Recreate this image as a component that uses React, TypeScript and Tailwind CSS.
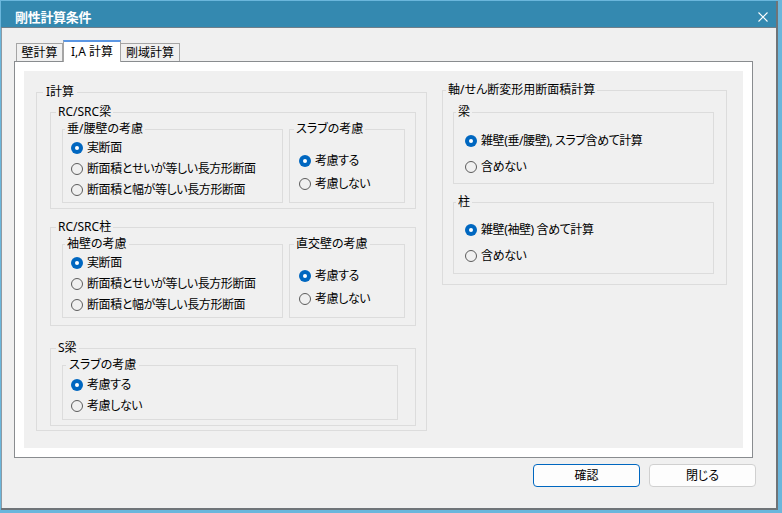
import type { ReactNode } from 'react'

const font = "font-['Noto_Sans','Noto_Sans_CJK_JP',sans-serif] [font-feature-settings:'palt']"

const Radio = ({ label, checked, rowClass }: { label: string; checked?: boolean; rowClass: string }) => (
  <div className={`flex items-center gap-[4px] ${rowClass}`}>
    {checked ? (
      <span className="w-[12px] h-[12px] rounded-full bg-[#0067c0] flex items-center justify-center shrink-0">
        <span className="w-[4px] h-[4px] rounded-full bg-white" />
      </span>
    ) : (
      <span className="w-[12px] h-[12px] rounded-full border border-[#5c5c5c] shrink-0" />
    )}
    <span className="leading-[16px] whitespace-nowrap tracking-[-0.4px]">{label}</span>
  </div>
)

const Group = ({
  title,
  className,
  legendClass = 'ml-[2px] px-[2px]',
  children,
}: {
  title: string
  className: string
  legendClass?: string
  children: ReactNode
}) => (
  <fieldset className={`border border-[#dcdcdc] min-w-0 ${className}`}>
    <legend className={`leading-[16px] whitespace-nowrap ${legendClass}`}>{title}</legend>
    {children}
  </fieldset>
)

// 垂/腰壁・袖壁 の3択
const SectionChoice = ({ title }: { title: string }) => (
  <Group title={title} className="w-[221px]">
    <div className="pl-[8px] pb-[2px]">
      <Radio label="実断面" checked rowClass="h-[21px]" />
      <Radio label="断面積とせいが等しい長方形断面" rowClass="h-[21px]" />
      <Radio label="断面積と幅が等しい長方形断面" rowClass="h-[21px]" />
    </div>
  </Group>
)

const ConsiderChoice = ({ title }: { title: string }) => (
  <Group title={title} className="w-[116px]" legendClass="ml-[4px] px-[2px]">
    <div className="pl-[9px] pt-[12px]">
      <Radio label="考慮する" checked rowClass="h-[23px]" />
      <Radio label="考慮しない" rowClass="h-[23px]" />
    </div>
  </Group>
)

const CloseIcon = () => (
  <svg width="10" height="10" viewBox="0 0 10 10" className="block">
    <path d="M0.5 0.5 L9.5 9.5 M9.5 0.5 L0.5 9.5" stroke="white" strokeWidth="1.1" />
  </svg>
)

export default function App() {
  return (
    <div className={`w-[782px] h-[513px] bg-[#6ab6dc] pl-[1px] pr-[4px] pt-[1px] pb-[3px] flex text-[12px] text-black ${font}`}>
      <div className="flex-1 flex flex-col border-r-2 border-b-2 border-[#6f7478] bg-[#f0f0f0]">
        {/* タイトルバー */}
        <div className="h-[27px] shrink-0 bg-[#3489b0] border-b border-[#6f7f8a] flex items-start pt-[8px] pl-[14px] pr-[8px]">
          <span className="text-white font-bold text-[13px] leading-[16px] flex-1 tracking-[-0.3px]">剛性計算条件</span>
          <span className="mt-[3px]">
            <CloseIcon />
          </span>
        </div>

        <div className="flex-1 flex flex-col border-l border-[#8d9aa3] pl-[12px] pt-[12px]">
          {/* タブ */}
          <div className="flex items-end h-[21px] pl-[2px]">
            <div className="w-[47px] h-[18px] border border-b-0 border-[#a5a5a5] flex items-center justify-center leading-[16px]">
              壁計算
            </div>
            <div className="relative z-10 w-[58px] h-[22px] -mb-px bg-white border-x border-[#a5a5a5] border-t-2 border-t-[#5a96e3] flex items-center justify-center leading-[16px]">
              I,A 計算
            </div>
            <div className="w-[59px] h-[18px] border border-l-0 border-b-0 border-[#a5a5a5] flex items-center justify-center leading-[16px]">
              剛域計算
            </div>
          </div>

          {/* タブパネル */}
          <div className="w-[739px] h-[397px] border border-[#898c8f] bg-white p-[9px] flex">
            <div className="flex-1 bg-[#f0f0f0] flex items-start pl-[12px] gap-[15px]">
              {/* I計算 */}
              <Group title="I計算" className="w-[391px] mt-[13px]" legendClass="ml-[6px] px-[3px]">
                <div className="pl-[13px] pb-[4px]">
                  <Group title="RC/SRC梁" className="w-[366px] mt-[4px]" legendClass="ml-[5px] px-[2px]">
                    <div className="pl-[11px] pt-[1px] pb-[5px] flex gap-[6px]">
                      <SectionChoice title="垂/腰壁の考慮" />
                      <ConsiderChoice title="スラブの考慮" />
                    </div>
                  </Group>
                  <Group title="RC/SRC柱" className="w-[366px] mt-[10px]" legendClass="ml-[5px] px-[2px]">
                    <div className="pl-[11px] pt-[1px] pb-[7px] flex gap-[6px]">
                      <SectionChoice title="袖壁の考慮" />
                      <ConsiderChoice title="直交壁の考慮" />
                    </div>
                  </Group>
                  <Group title="S梁" className="w-[366px] mt-[14px]" legendClass="ml-[5px] px-[2px]">
                    <div className="pl-[11px] pt-[1px] pb-[5px]">
                      <Group title="スラブの考慮" className="w-[336px]" legendClass="ml-[3px] px-[3px]">
                        <div className="pl-[8px] pt-[1px] pb-[3px]">
                          <Radio label="考慮する" checked rowClass="h-[21px]" />
                          <Radio label="考慮しない" rowClass="h-[21px]" />
                        </div>
                      </Group>
                    </div>
                  </Group>
                </div>
              </Group>

              {/* 軸/せん断変形用断面積計算 */}
              <Group title="軸/せん断変形用断面積計算" className="w-[285px] mt-[11px]" legendClass="ml-[3px] px-[2px]">
                <div className="pl-[10px] pb-[10px]">
                  <Group title="梁" className="w-[261px] mt-[6px]">
                    <div className="pl-[11px] pt-[8px] pb-[3px]">
                      <Radio label="雑壁(垂/腰壁), スラブ含めて計算" checked rowClass="h-[26px]" />
                      <Radio label="含めない" rowClass="h-[26px]" />
                    </div>
                  </Group>
                  <Group title="柱" className="w-[261px] mt-[10px]">
                    <div className="pl-[11px] pt-[7px] pb-[4px]">
                      <Radio label="雑壁(袖壁) 含めて計算" checked rowClass="h-[26px]" />
                      <Radio label="含めない" rowClass="h-[26px]" />
                    </div>
                  </Group>
                </div>
              </Group>
            </div>
          </div>

          {/* ボタン */}
          <div className="w-[742px] mt-[6px] flex justify-end gap-[9px]">
            <button className="w-[107px] h-[23px] rounded-[4px] border border-[#0067c0] bg-[#fdfdfd] leading-[16px]">
              確認
            </button>
            <button className="w-[107px] h-[23px] rounded-[4px] border border-[#d0d0d0] bg-[#fdfdfd] leading-[16px]">
              閉じる
            </button>
          </div>
        </div>
      </div>
    </div>
  )
}
